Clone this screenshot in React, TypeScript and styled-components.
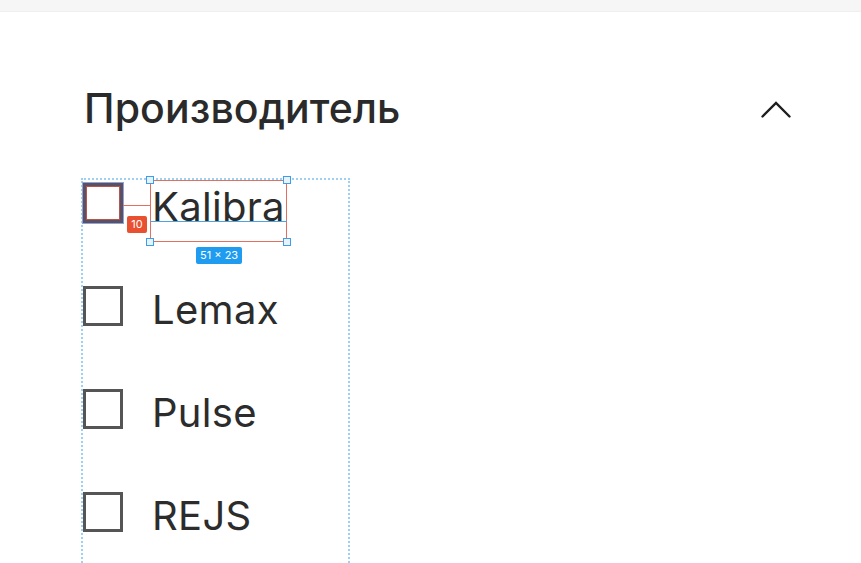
import React from "react";
import styled, { createGlobalStyle } from "styled-components";

const GlobalStyle = createGlobalStyle`
  html, body { margin: 0; padding: 0; background: #ffffff; }
  body { font-family: Inter, "Noto Sans", sans-serif; color: #2c2c2c; overflow: hidden; }
`;

const Page = styled.div`
  width: 861px;
  height: 563px;
  overflow: hidden;
  display: flex;
  flex-direction: column;
`;

const TopBar = styled.div`
  height: 11px;
  flex: none;
  background: #f6f6f6;
  border-bottom: 1px solid #efefef;
`;

const Section = styled.section`
  padding: 71px 70px 0 84px;
  display: flex;
  flex-direction: column;
`;

const Header = styled.div`
  height: 50px;
  display: flex;
  align-items: center;
  justify-content: space-between;
`;

const Title = styled.h2`
  margin: 0;
  font-size: 41px;
  line-height: 50px;
  font-weight: 500;
  color: #2a2a2a;
  letter-spacing: 0.1px;
`;

const Chevron = styled.svg`
  width: 30px;
  height: 18px;
  margin-top: 3px;
`;

const List = styled.ul`
  list-style: none;
  margin: 45px 0 0 -3px;
  padding: 0 0 200px 0;
  width: 265px;
  border: 2px dotted #9dd0f2;
  border-bottom: none;
  display: flex;
  flex-direction: column;
  gap: 41px;
`;

const Row = styled.li`
  height: 62px;
  display: flex;
  align-items: flex-start;
  position: relative;
`;

const Box = styled.span<{ $hovered?: boolean }>`
  width: 40px;
  height: 40px;
  box-sizing: border-box;
  margin-top: 3px;
  border: 3px solid ${(p) => (p.$hovered ? "#5e4f63" : "#555555")};
  box-shadow: ${(p) =>
    p.$hovered ? "0 0 0 1px #8aa6d6, inset 0 0 0 1px #b5564c" : "none"};
  flex: none;
`;

const Label = styled.span`
  margin-left: 29px;
  height: 62px;
  font-size: 40px;
  line-height: 54px;
  font-weight: 400;
  color: #2c2c2c;
  position: relative;
  white-space: nowrap;
  letter-spacing: 0.3px;
`;

const Selection = styled.span`
  position: absolute;
  top: 0;
  bottom: 0;
  left: -2px;
  width: 137px;
  box-sizing: border-box;
  border: 1px solid #e0705f;
  pointer-events: none;
`;

const Baseline = styled.span`
  position: absolute;
  left: -2px;
  width: 137px;
  top: 41px;
  height: 1px;
  background: #4aa6e2;
`;

const Handle = styled.span<{ $x: "left" | "right"; $y: "top" | "bottom" }>`
  position: absolute;
  width: 6px;
  height: 6px;
  background: #e6f3fd;
  border: 1px solid #3d9de6;
  ${(p) => (p.$x === "left" ? "left: -6px;" : "left: 131px;")}
  ${(p) => (p.$y === "top" ? "top: -4px;" : "bottom: -4px;")}
`;

const Connector = styled.span`
  position: absolute;
  left: 40px;
  top: 25px;
  width: 28px;
  height: 1px;
  background: #e0705f;
`;

const Badge = styled.span<{ $color: string }>`
  position: absolute;
  background: ${(p) => p.$color};
  color: #ffffff;
  font-family: Inter, "Noto Sans", sans-serif;
  font-size: 11px;
  line-height: 17px;
  height: 17px;
  padding: 0 4px;
  border-radius: 2px;
  white-space: nowrap;
`;

const brands = ["Kalibra", "Lemax", "Pulse", "REJS"];

export default function App() {
  return (
    <Page>
      <GlobalStyle />
      <TopBar />
      <Section>
        <Header>
          <Title>Производитель</Title>
          <Chevron viewBox="0 0 30 18" fill="none">
            <polyline
              points="1.5,15.5 15,2 28.5,15.5"
              stroke="#1e1e1e"
              strokeWidth="2.4"
              strokeLinecap="round"
              strokeLinejoin="miter"
            />
          </Chevron>
        </Header>
        <List>
          {brands.map((b, i) => (
            <Row key={b}>
              <Box $hovered={i === 0} />
              <Label>
                {b}
                {i === 0 && (
                  <>
                    <Selection />
                    <Baseline />
                    <Handle $x="left" $y="top" />
                    <Handle $x="right" $y="top" />
                    <Handle $x="left" $y="bottom" />
                    <Handle $x="right" $y="bottom" />
                  </>
                )}
              </Label>
              {i === 0 && (
                <>
                  <Connector />
                  <Badge $color="#e8502f" style={{ left: 44, top: 36, width: 12, textAlign: "center" }}>
                    10
                  </Badge>
                  <Badge $color="#1f9cf0" style={{ left: 113, top: 67 }}>
                    51 × 23
                  </Badge>
                </>
              )}
            </Row>
          ))}
        </List>
      </Section>
    </Page>
  );
}
